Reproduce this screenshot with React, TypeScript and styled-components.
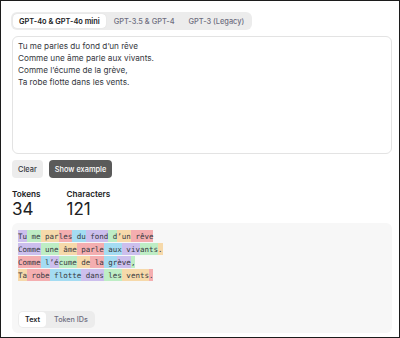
import styled, { createGlobalStyle } from 'styled-components';

const MODELS = ['GPT-4o & GPT-4o mini', 'GPT-3.5 & GPT-4', 'GPT-3 (Legacy)'];

const POEM =
  'Tu me parles du fond d’un rêve\nComme une âme parle aux vivants.\nComme l’écume de la grève,\nTa robe flotte dans les vents.';

const TOKENS = [
  'Tu', ' me', ' par', 'les', ' du', ' fond', ' d', '’un', ' rêve', '\n',
  'Comme', ' une', ' âme', ' parle', ' aux', ' viv', 'ants', '.\n',
  'Comme', ' l', '’é', 'cume', ' de', ' la', ' gr', 'ève', ',\n',
  'Ta', ' robe', ' flotte', ' dans', ' les', ' vents', '.',
];

const TOKEN_COLORS = [
  'rgba(107, 64, 216, 0.3)',
  'rgba(104, 222, 122, 0.4)',
  'rgba(244, 172, 54, 0.4)',
  'rgba(239, 65, 70, 0.4)',
  'rgba(39, 181, 234, 0.4)',
];

export default function App() {
  return (
    <>
      <GlobalStyle />
      <Frame>
        <Segmented>
          {MODELS.map((m, i) => (
            <SegButton key={m} active={i === 0}>
              {m}
            </SegButton>
          ))}
        </Segmented>

        <Input readOnly value={POEM} />

        <Actions>
          <Button>Clear</Button>
          <Button dark>Show example</Button>
        </Actions>

        <Stats>
          <Stat>
            <StatLabel>Tokens</StatLabel>
            <StatValue>34</StatValue>
          </Stat>
          <Stat>
            <StatLabel>Characters</StatLabel>
            <StatValue>121</StatValue>
          </Stat>
        </Stats>

        <Output>
          <TokenText>
            {TOKENS.map((t, i) => (
              <Token key={i} color={TOKEN_COLORS[i % 5]}>
                {t}
              </Token>
            ))}
          </TokenText>
          <SmallSegmented>
            <SmallSegButton active>Text</SmallSegButton>
            <SmallSegButton>Token IDs</SmallSegButton>
          </SmallSegmented>
        </Output>
      </Frame>
    </>
  );
}

//styles

const GlobalStyle = createGlobalStyle`
  html, body {
    margin: 0;
    padding: 0;
    background: #ffffff;
  }
  body {
    font-family: Inter, "Liberation Sans", sans-serif;
    color: #202123;
  }
`;

const Frame = styled.div`
  width: 400px;
  height: 338px;
  box-sizing: border-box;
  border: 1px solid #1c1c1c;
  padding: 11px 7px 4px 10px;
  display: flex;
  flex-direction: column;
  background: #ffffff;
`;

const Segmented = styled.div`
  align-self: flex-start;
  display: flex;
  gap: 2px;
  padding: 2px;
  background: #ececec;
  border-radius: 6px;
`;

const SegButton = styled.div<{ active?: boolean }>`
  height: 14px;
  display: flex;
  align-items: center;
  padding: 0 6px;
  border-radius: 4px;
  font-size: 7.4px;
  font-weight: ${(p) => (p.active ? 600 : 500)};
  color: ${(p) => (p.active ? '#202123' : '#6e6e80')};
  background: ${(p) => (p.active ? '#ffffff' : 'transparent')};
  box-shadow: ${(p) => (p.active ? '0 0 1px rgba(0,0,0,0.15)' : 'none')};
  white-space: nowrap;
`;

const Input = styled.textarea`
  margin-top: 6px;
  margin-left: 1px;
  height: 118px;
  box-sizing: border-box;
  border: 1px solid #e3e3e3;
  border-radius: 6px;
  padding: 3px 5px;
  resize: none;
  font-family: Inter, "Liberation Sans", sans-serif;
  font-size: 8.2px;
  line-height: 12px;
  color: #353740;
  background: #ffffff;
  outline: none;
  overflow: hidden;
`;

const Actions = styled.div`
  display: flex;
  gap: 6px;
  margin-top: 6px;
  margin-left: 1px;
`;

const Button = styled.div<{ dark?: boolean }>`
  height: 18px;
  display: flex;
  align-items: center;
  padding: 0 6px;
  border-radius: 4px;
  font-size: 7.4px;
  font-weight: 500;
  color: ${(p) => (p.dark ? '#ffffff' : '#353740')};
  background: ${(p) => (p.dark ? '#5a5a5a' : '#ececec')};
`;

const Stats = styled.div`
  display: flex;
  gap: 26px;
  margin-top: 11px;
  margin-left: 1px;
`;

const Stat = styled.div`
  display: flex;
  flex-direction: column;
`;

const StatLabel = styled.div`
  font-size: 8.2px;
  font-weight: 600;
  line-height: 11px;
  color: #202123;
`;

const StatValue = styled.div`
  font-size: 17px;
  font-weight: 400;
  line-height: 18px;
  color: #202123;
`;

const Output = styled.div`
  margin-top: 5px;
  margin-left: 1px;
  height: 110px;
  box-sizing: border-box;
  background: #f7f7f7;
  border-radius: 6px;
  padding: 6px 6px 5px 6px;
  display: flex;
  flex-direction: column;
  justify-content: space-between;
`;

const TokenText = styled.div`
  font-family: "DejaVu Sans Mono", "Liberation Mono", monospace;
  font-size: 7.5px;
  line-height: 13px;
  white-space: pre-wrap;
  color: #353740;
`;

const Token = styled.span<{ color: string }>`
  background: ${(p) => p.color};
  padding: 1.5px 0;
`;

const SmallSegmented = styled.div`
  align-self: flex-start;
  display: flex;
  gap: 2px;
  padding: 1px;
  background: #ececec;
  border-radius: 5px;
`;

const SmallSegButton = styled.div<{ active?: boolean }>`
  height: 15px;
  display: flex;
  align-items: center;
  padding: 0 6px;
  border-radius: 4px;
  font-size: 7.2px;
  font-weight: ${(p) => (p.active ? 600 : 500)};
  color: ${(p) => (p.active ? '#202123' : '#6e6e80')};
  background: ${(p) => (p.active ? '#ffffff' : 'transparent')};
`;
